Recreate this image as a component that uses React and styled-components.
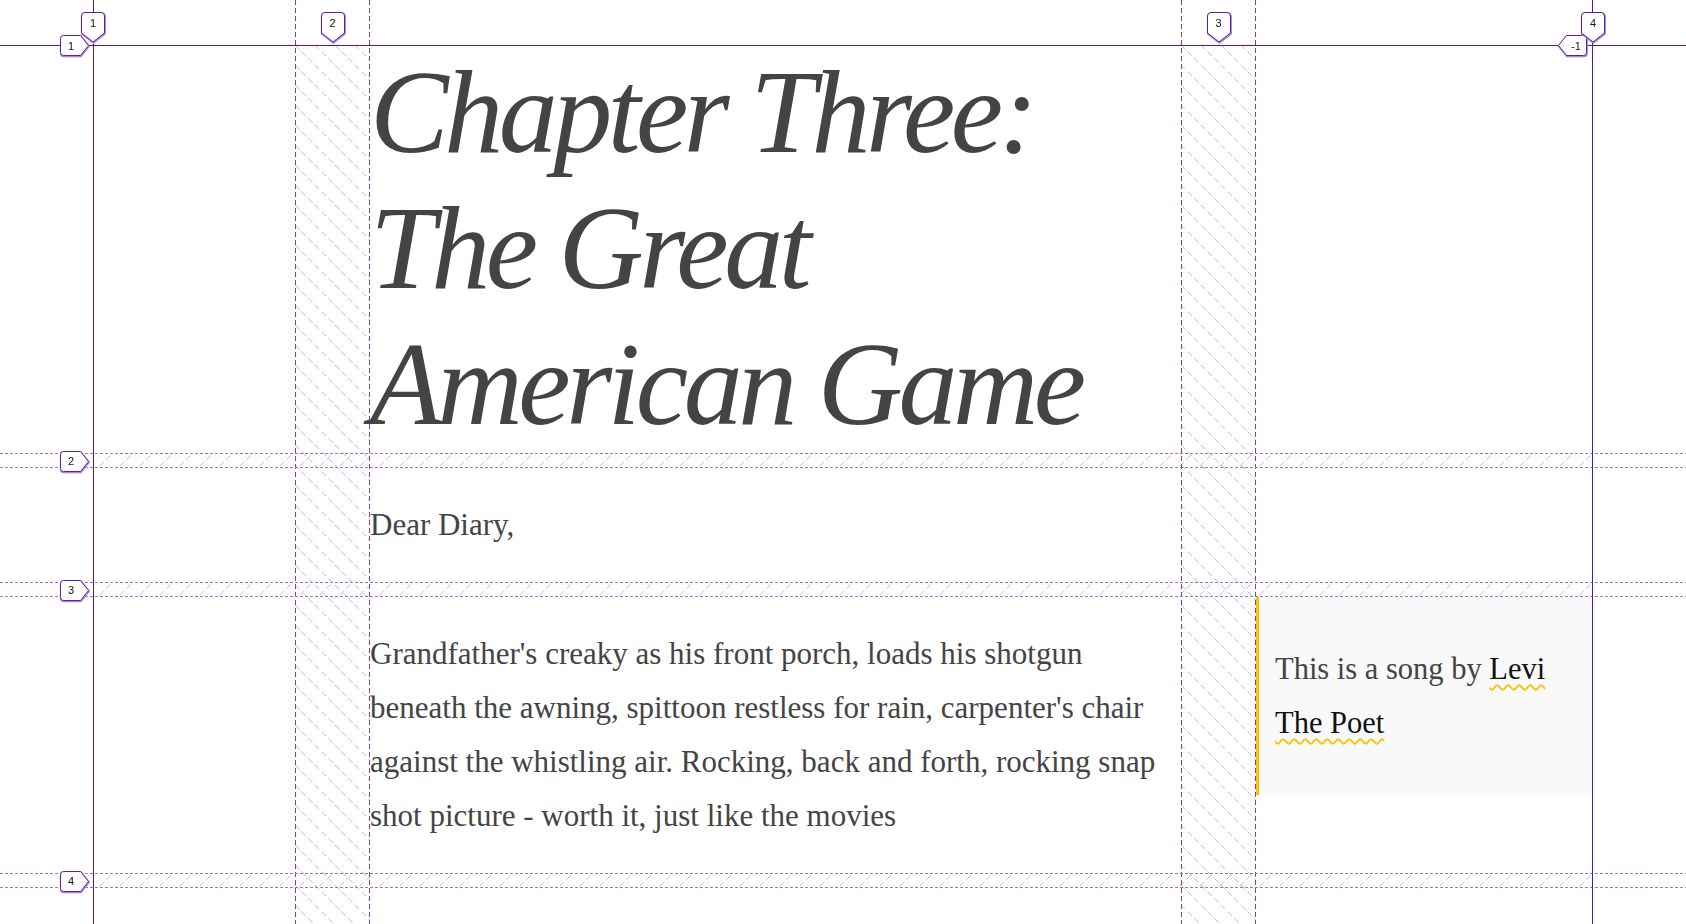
import React from 'react';
import styled, { createGlobalStyle } from 'styled-components';

// grid of the page, also used to draw the inspector overlay
const colTracks = [202, 75, 811, 75, 337];
const rowTracks = [408, 15, 114, 15, 276, 15];
const gridTop = 45;
const gridWidth = colTracks.reduce((a, b) => a + b, 0);

const colors = {
  text: '#444',
  ink: '#111',
  line: '#55169b',
  gapLine: '#7b3ebd',
  rowLine: '#9d76cc',
  hatch: '#cbb6e7',
  yellow: '#ffc107',
  aside: '#f9f9f9',
};

const GlobalStyle = createGlobalStyle`
  html, body {
    margin: 0;
    padding: 0;
    background: #fff;
    overflow: hidden;
  }
  body {
    font-family: "Liberation Serif", "Times New Roman", serif;
    color: ${colors.text};
  }
`;

const Page = styled.main`
  display: grid;
  width: ${gridWidth}px;
  margin: ${gridTop}px auto 0;
  grid-template-columns: ${colTracks[0]}px ${colTracks[2]}px ${colTracks[4]}px;
  column-gap: ${colTracks[1]}px;
  row-gap: ${rowTracks[1]}px;
  align-items: start;
`;

const Title = styled.h1`
  grid-column: 2;
  margin: 0;
  font-family: "Liberation Serif", "Times New Roman", serif;
  font-style: italic;
  font-weight: 400;
  font-size: 118px;
  line-height: 136px;
  letter-spacing: -4.5px;
  color: ${colors.text};
`;

const Text = styled.p`
  grid-column: 2;
  margin: 30px 0;
  font-size: 31px;
  line-height: 54px;
`;

const Aside = styled.aside`
  grid-column: 3;
  grid-row: 3;
  background: ${colors.aside};
  border-left: 3px solid ${colors.yellow};
  padding: 15px 16px;
  p {
    margin: 30px 0;
    font-size: 30.5px;
    line-height: 54px;
  }
`;

const Link = styled.a`
  color: ${colors.ink};
  text-decoration: underline wavy ${colors.yellow};
  text-decoration-thickness: 1.5px;
  text-underline-offset: 5px;
`;

/* ---------- grid inspector overlay ---------- */

const Overlay = styled.div`
  position: fixed;
  inset: 0;
  pointer-events: none;
  display: grid;
  grid-template-columns: 1fr ${colTracks.map((t) => `${t}px`).join(' ')} 1fr;
  grid-template-rows: ${gridTop}px ${rowTracks.map((t) => `${t}px`).join(' ')} 1fr;
`;

const Outline = styled.div`
  grid-column: 2 / 7;
  grid-row: 1 / -1;
  border-left: 1px solid ${colors.line};
  border-right: 1px solid ${colors.line};
`;

const TopLine = styled.div`
  grid-column: 1 / -1;
  grid-row: 2;
  border-top: 1px solid ${colors.line};
`;

const ColGap = styled.div`
  grid-column: ${(p) => p.$col};
  grid-row: 1 / -1;
  background-image:
    repeating-linear-gradient(to bottom, ${colors.gapLine} 0 5px, transparent 5px 8px),
    repeating-linear-gradient(to bottom, ${colors.gapLine} 0 5px, transparent 5px 8px);
  background-size: 1px 100%;
  background-position: left top, right top;
  background-repeat: no-repeat;
`;

const RowGap = styled.div`
  grid-column: 1 / -1;
  grid-row: ${(p) => p.$row};
  background-image:
    repeating-linear-gradient(to right, ${colors.rowLine} 0 3px, transparent 3px 5px),
    repeating-linear-gradient(to right, ${colors.rowLine} 0 3px, transparent 3px 5px);
  background-size: 100% 1px;
  background-position: left top, left bottom;
  background-repeat: no-repeat;
`;

const HatchCell = styled.div`
  grid-column: ${(p) => p.$col};
  grid-row: ${(p) => p.$row};
  svg {
    display: block;
    width: 100%;
    height: 100%;
  }
`;

const Hatch = ({ id, dir, col, row }) => (
  <HatchCell $col={col} $row={row}>
    <svg>
      <defs>
        <pattern id={id} width="20" height="20" patternUnits="userSpaceOnUse">
          <line
            x1="0"
            y1={dir === 'down' ? 0 : 20}
            x2="20"
            y2={dir === 'down' ? 20 : 0}
            stroke={colors.hatch}
            strokeWidth="1"
            strokeDasharray="6 3.43"
          />
        </pattern>
      </defs>
      <rect width="100%" height="100%" fill={`url(#${id})`} />
    </svg>
  </HatchCell>
);

const LabelBox = styled.div`
  position: absolute;
  display: flex;
  justify-content: center;
  align-items: ${(p) => (p.$kind === 'col' ? 'flex-start' : 'center')};
  box-sizing: border-box;
  width: ${(p) => (p.$kind === 'col' ? 24 : 30)}px;
  height: ${(p) => (p.$kind === 'col' ? 31 : 21)}px;
  padding: ${(p) =>
    p.$kind === 'col' ? '5px 0 0' : p.$kind === 'row' ? '0 8px 0 0' : '0 0 0 8px'};
  font-family: "Liberation Sans", Arial, sans-serif;
  font-size: 11px;
  line-height: 12px;
  color: ${colors.ink};
  svg {
    position: absolute;
    inset: 0;
    overflow: visible;
  }
  span {
    position: relative;
  }
`;

const shapes = {
  col: 'M4,0.5 H20 Q23.5,0.5 23.5,4 V21 L12,30 L0.5,21 V4 Q0.5,0.5 4,0.5 Z',
  row: 'M3.5,0.5 H20.5 L28.5,10.5 L20.5,20.5 H3.5 Q0.5,20.5 0.5,17.5 V3.5 Q0.5,0.5 3.5,0.5 Z',
  end: 'M9.5,0.5 H26.5 Q29.5,0.5 29.5,3.5 V17.5 Q29.5,20.5 26.5,20.5 H9.5 L1.5,10.5 Z',
};

const GridLabel = ({ kind, text, x, y }) => (
  <LabelBox $kind={kind} style={{ left: `calc(50% - ${gridWidth / 2}px + ${x}px)`, top: y }}>
    <svg width="100%" height="100%">
      <path d={shapes[kind]} fill="none" stroke="#a883d6" strokeWidth="2" transform="translate(0.4 0.8)" />
      <path d={shapes[kind]} fill="#fff" stroke="#5d1f9f" strokeWidth="1" />
    </svg>
    <span>{text}</span>
  </LabelBox>
);

const colLines = [0, colTracks[0] + colTracks[1] / 2, colTracks[0] + colTracks[1] + colTracks[2] + colTracks[3] / 2, gridWidth];
const rowLines = [0];
let acc = 0;
rowTracks.forEach((t, i) => {
  if (i % 2 === 1) rowLines.push(acc + t / 2);
  acc += t;
});

// overlay rows: 1 = above grid, then the page tracks; row gaps sit in rows 3, 5, 7
const gapRows = [3, 5, 7];

const InspectorOverlay = () => (
  <Overlay>
    <Hatch id="hatch-c2" dir="down" col={3} row="2 / -1" />
    <Hatch id="hatch-c3" dir="down" col={5} row="2 / -1" />
    {gapRows.map((r) => (
      <Hatch key={r} id={`hatch-r${r}`} dir="up" col="2 / 7" row={r} />
    ))}
    <ColGap $col={3} />
    <ColGap $col={5} />
    {gapRows.map((r) => (
      <RowGap key={r} $row={r} />
    ))}
    <Outline />
    <TopLine />
    {rowLines.map((ry, i) => (
      <GridLabel key={`r${i}`} kind="row" text={i + 1} x={-33} y={gridTop + ry - 10} />
    ))}
    <GridLabel kind="end" text="-1" x={gridWidth - 36} y={gridTop - 10} />
    {colLines.map((cx, i) => (
      <GridLabel key={`c${i}`} kind="col" text={i + 1} x={cx - 12} y={12} />
    ))}
  </Overlay>
);

const App = () => (
  <>
    <GlobalStyle />
    <Page>
      <Title>Chapter Three: The Great American Game</Title>
      <Text>Dear Diary,</Text>
      <Text>
        Grandfather's creaky as his front porch, loads his shotgun beneath the awning, spittoon
        restless for rain, carpenter's chair against the whistling air. Rocking, back and forth,
        rocking snap shot picture - worth it, just like the movies
      </Text>
      <Aside>
        <p>
          This is a song by <Link href="#">Levi The Poet</Link>
        </p>
      </Aside>
    </Page>
    <InspectorOverlay />
  </>
);

export default App;
